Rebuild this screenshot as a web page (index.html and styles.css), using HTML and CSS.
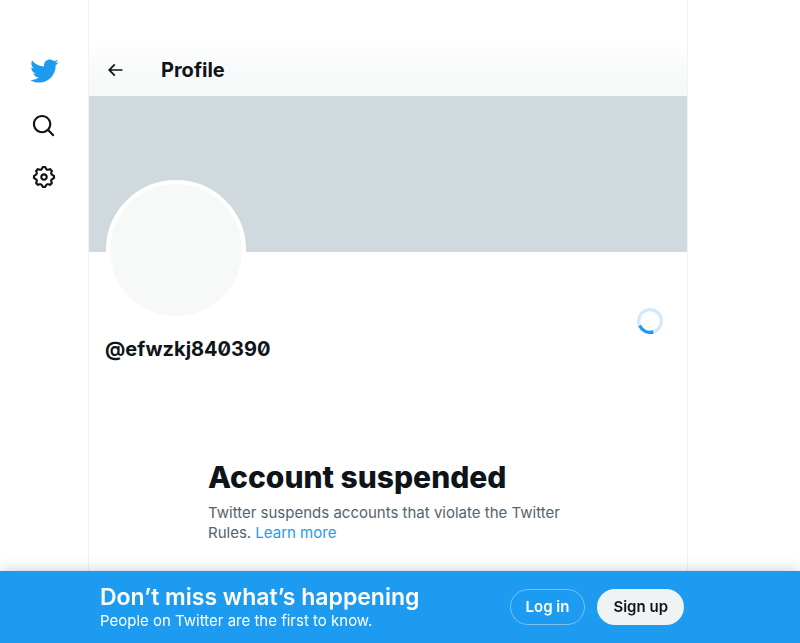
FILE: index.html
```html
<!DOCTYPE html>
<html lang="en">
<head>
<meta charset="utf-8">
<meta name="viewport" content="width=device-width, initial-scale=1">
<title>Profile / Twitter</title>
<link rel="stylesheet" href="styles.css">
</head>
<body>
<div class="layout">
  <nav class="sidebar" aria-label="Primary">
    <a class="nav-link nav-logo" href="#" aria-label="Twitter">
      <svg viewBox="0 0 24 24"><path d="M23.643 4.937c-.835.37-1.732.62-2.675.733.962-.576 1.7-1.49 2.048-2.578-.9.534-1.897.922-2.958 1.13-.85-.904-2.06-1.47-3.4-1.47-2.572 0-4.658 2.086-4.658 4.66 0 .364.042.718.12 1.06-3.873-.195-7.304-2.05-9.602-4.868-.4.69-.63 1.49-.63 2.342 0 1.616.823 3.043 2.072 3.878-.764-.025-1.482-.234-2.11-.583v.06c0 2.257 1.605 4.14 3.737 4.568-.392.106-.803.162-1.227.162-.3 0-.593-.028-.877-.082.593 1.85 2.313 3.198 4.352 3.234-1.595 1.25-3.604 1.995-5.786 1.995-.376 0-.747-.022-1.112-.065 2.062 1.323 4.51 2.093 7.14 2.093 8.57 0 13.255-7.098 13.255-13.254 0-.2-.005-.402-.014-.602.91-.658 1.7-1.477 2.323-2.41z"/></svg>
    </a>
    <a class="nav-link" href="#" aria-label="Explore">
      <svg viewBox="0 0 24 24"><path d="M10.25 3.75c-3.59 0-6.5 2.91-6.5 6.5s2.91 6.5 6.5 6.5c1.795 0 3.419-.726 4.596-1.904 1.178-1.177 1.904-2.801 1.904-4.596 0-3.59-2.91-6.5-6.5-6.5zm-8.5 6.5c0-4.694 3.806-8.5 8.5-8.5s8.5 3.806 8.5 8.5c0 1.986-.682 3.815-1.824 5.262l4.781 4.781-1.414 1.414-4.781-4.781c-1.447 1.142-3.276 1.824-5.262 1.824-4.694 0-8.5-3.806-8.5-8.5z"/></svg>
    </a>
    <a class="nav-link" href="#" aria-label="Settings">
      <svg viewBox="0 0 24 24"><path d="M10.54 1.75h2.92l1.57 2.36c.11.17.32.25.53.21l2.53-.59 2.17 2.17-.58 2.54c-.05.2.04.41.21.53l2.36 1.57v2.92l-2.36 1.57c-.17.12-.26.33-.21.53l.58 2.54-2.17 2.17-2.53-.59c-.21-.04-.42.04-.53.21l-1.57 2.36h-2.92l-1.58-2.36c-.11-.17-.32-.25-.52-.21l-2.54.59-2.17-2.17.58-2.54c.05-.2-.03-.41-.21-.53l-2.35-1.57v-2.92L4.1 8.97c.18-.12.26-.33.21-.53L3.73 5.9 5.9 3.73l2.54.59c.2.04.41-.04.52-.21l1.58-2.36zm1.07 2l-.98 1.47C10.05 6.08 9 6.5 7.99 6.27l-1.46-.34-.6.6.33 1.46c.24 1.01-.18 2.07-1.05 2.64l-1.46.98v.78l1.46.98c.87.57 1.29 1.63 1.05 2.64l-.33 1.46.6.6 1.46-.34c1.01-.23 2.06.19 2.64 1.05l.98 1.47h.78l.97-1.47c.58-.86 1.63-1.28 2.65-1.05l1.45.34.61-.6-.34-1.46c-.23-1.01.18-2.07 1.05-2.64l1.47-.98v-.78l-1.47-.98c-.87-.57-1.28-1.63-1.05-2.64l.34-1.46-.61-.6-1.45.34c-1.02.23-2.07-.19-2.65-1.05l-.97-1.47h-.78zM12 10.5c-.83 0-1.5.67-1.5 1.5s.67 1.5 1.5 1.5c.82 0 1.5-.67 1.5-1.5s-.68-1.5-1.5-1.5zM8.5 12c0-1.93 1.56-3.5 3.5-3.5 1.93 0 3.5 1.57 3.5 3.5s-1.57 3.5-3.5 3.5c-1.94 0-3.5-1.57-3.5-3.5z"/></svg>
    </a>
  </nav>

  <main class="column">
    <header class="topbar">
      <button class="back" type="button" aria-label="Back">
        <svg viewBox="0 0 24 24"><path d="M7.414 13l5.043 5.04-1.414 1.42L3.586 12l7.457-7.46 1.414 1.42L7.414 11H21v2H7.414z"/></svg>
      </button>
      <h1 class="topbar-title">Profile</h1>
    </header>
    <div class="banner"></div>
    <section class="profile">
      <div class="avatar"></div>
      <svg class="spinner" viewBox="0 0 32 32" role="img" aria-label="Loading">
        <circle class="spinner-track" cx="16" cy="16" r="14"/>
        <circle class="spinner-arc" cx="16" cy="16" r="14" transform="rotate(73 16 16)"/>
      </svg>
      <h2 class="handle">@efwzkj840390</h2>
    </section>
    <section class="notice">
      <h2 class="notice-title">Account suspended</h2>
      <p class="notice-text">Twitter suspends accounts that violate the Twitter Rules. <a href="#">Learn more</a></p>
    </section>
  </main>
</div>

<aside class="signup-bar">
  <div class="signup-inner">
    <div class="signup-copy">
      <p class="signup-title">Don’t miss what’s happening</p>
      <p class="signup-text">People on Twitter are the first to know.</p>
    </div>
    <div class="signup-actions">
      <button class="btn btn-outline" type="button">Log in</button>
      <button class="btn btn-light" type="button">Sign up</button>
    </div>
  </div>
</aside>
</body>
</html>
```

FILE: styles.css
```css
* {
  box-sizing: border-box;
}

body {
  margin: 0;
  background: #fff;
  color: #0f1419;
  font-family: Inter, "Liberation Sans", sans-serif;
  font-size: 15px;
  line-height: 20px;
}

h1, h2, p {
  margin: 0;
}

svg {
  display: block;
  fill: currentColor;
}

a {
  color: #1d9bf0;
  text-decoration: none;
}

.layout {
  display: flex;
  min-height: 100vh;
}

.sidebar {
  flex: 0 0 88px;
  display: flex;
  flex-direction: column;
  align-items: center;
  padding-top: 45px;
}

.nav-link {
  display: grid;
  place-items: center;
  width: 52px;
  height: 51px;
  color: #0f1419;
}

.nav-link svg {
  width: 26px;
  height: 26px;
}

.nav-logo {
  color: #1d9bf0;
}

.nav-logo svg {
  width: 30px;
  height: 30px;
}

.nav-logo + .nav-link {
  margin-top: 4px;
}

.column {
  flex: 0 1 600px;
  border: solid #eff3f4;
  border-width: 0 1px;
  padding-top: 43px;
}

.topbar {
  display: flex;
  align-items: center;
  height: 53px;
  padding: 0 16px;
  background: linear-gradient(#fff, #fafbfc 30%, #f7f9f9 80%);
}

.back {
  width: 56px;
  padding: 0;
  border: 0;
  background: none;
  color: inherit;
}

.back svg {
  width: 20px;
  height: 20px;
}

.topbar-title,
.handle {
  font-size: 20px;
  line-height: 24px;
  font-weight: 700;
}

.banner {
  height: 156px;
  background: #cfd9de;
}

.profile {
  display: grid;
  grid-template-columns: 1fr auto;
  align-items: end;
  padding: 0 24px 0 16px;
}

.avatar {
  width: 140px;
  height: 140px;
  margin: -72px 0 0 1px;
  border: 4px solid #fff;
  border-radius: 50%;
  background: #f7f9f9;
}

.spinner {
  width: 26px;
  height: 26px;
  margin-bottom: -14px;
  fill: none;
  stroke: #1d9bf0;
  stroke-width: 4;
}

.spinner-track {
  opacity: 0.2;
}

.spinner-arc {
  stroke-dasharray: 20 68;
}

.handle {
  margin-top: 17px;
  font-variant-numeric: slashed-zero;
}

.notice {
  max-width: 400px;
  margin: 98px auto;
  padding: 0 20px;
}

.notice-title {
  margin-bottom: 8px;
  font-size: 30px;
  line-height: 36px;
  font-weight: 800;
}

.notice-text {
  color: #536471;
}

.signup-bar {
  position: fixed;
  right: 0;
  bottom: 0;
  left: 0;
  background: #1d9bf0;
  color: #fff;
  box-shadow: 0 0 12px rgba(101, 119, 134, 0.4);
}

.signup-inner {
  display: flex;
  align-items: center;
  justify-content: space-between;
  max-width: 688px;
  height: 72px;
  padding: 0 4px 0 100px;
}

.signup-title {
  font-size: 23px;
  line-height: 28px;
  font-weight: 600;
}

.signup-actions {
  display: flex;
  gap: 12px;
}

.btn {
  height: 36px;
  padding: 0 15px;
  border: 1px solid transparent;
  border-radius: 18px;
  font: inherit;
  font-weight: 600;
}

.btn-outline {
  border-color: #77c3f6;
  background: transparent;
  color: #fff;
}

.btn-light {
  background: #eff3f4;
  color: #0f1419;
}
```
